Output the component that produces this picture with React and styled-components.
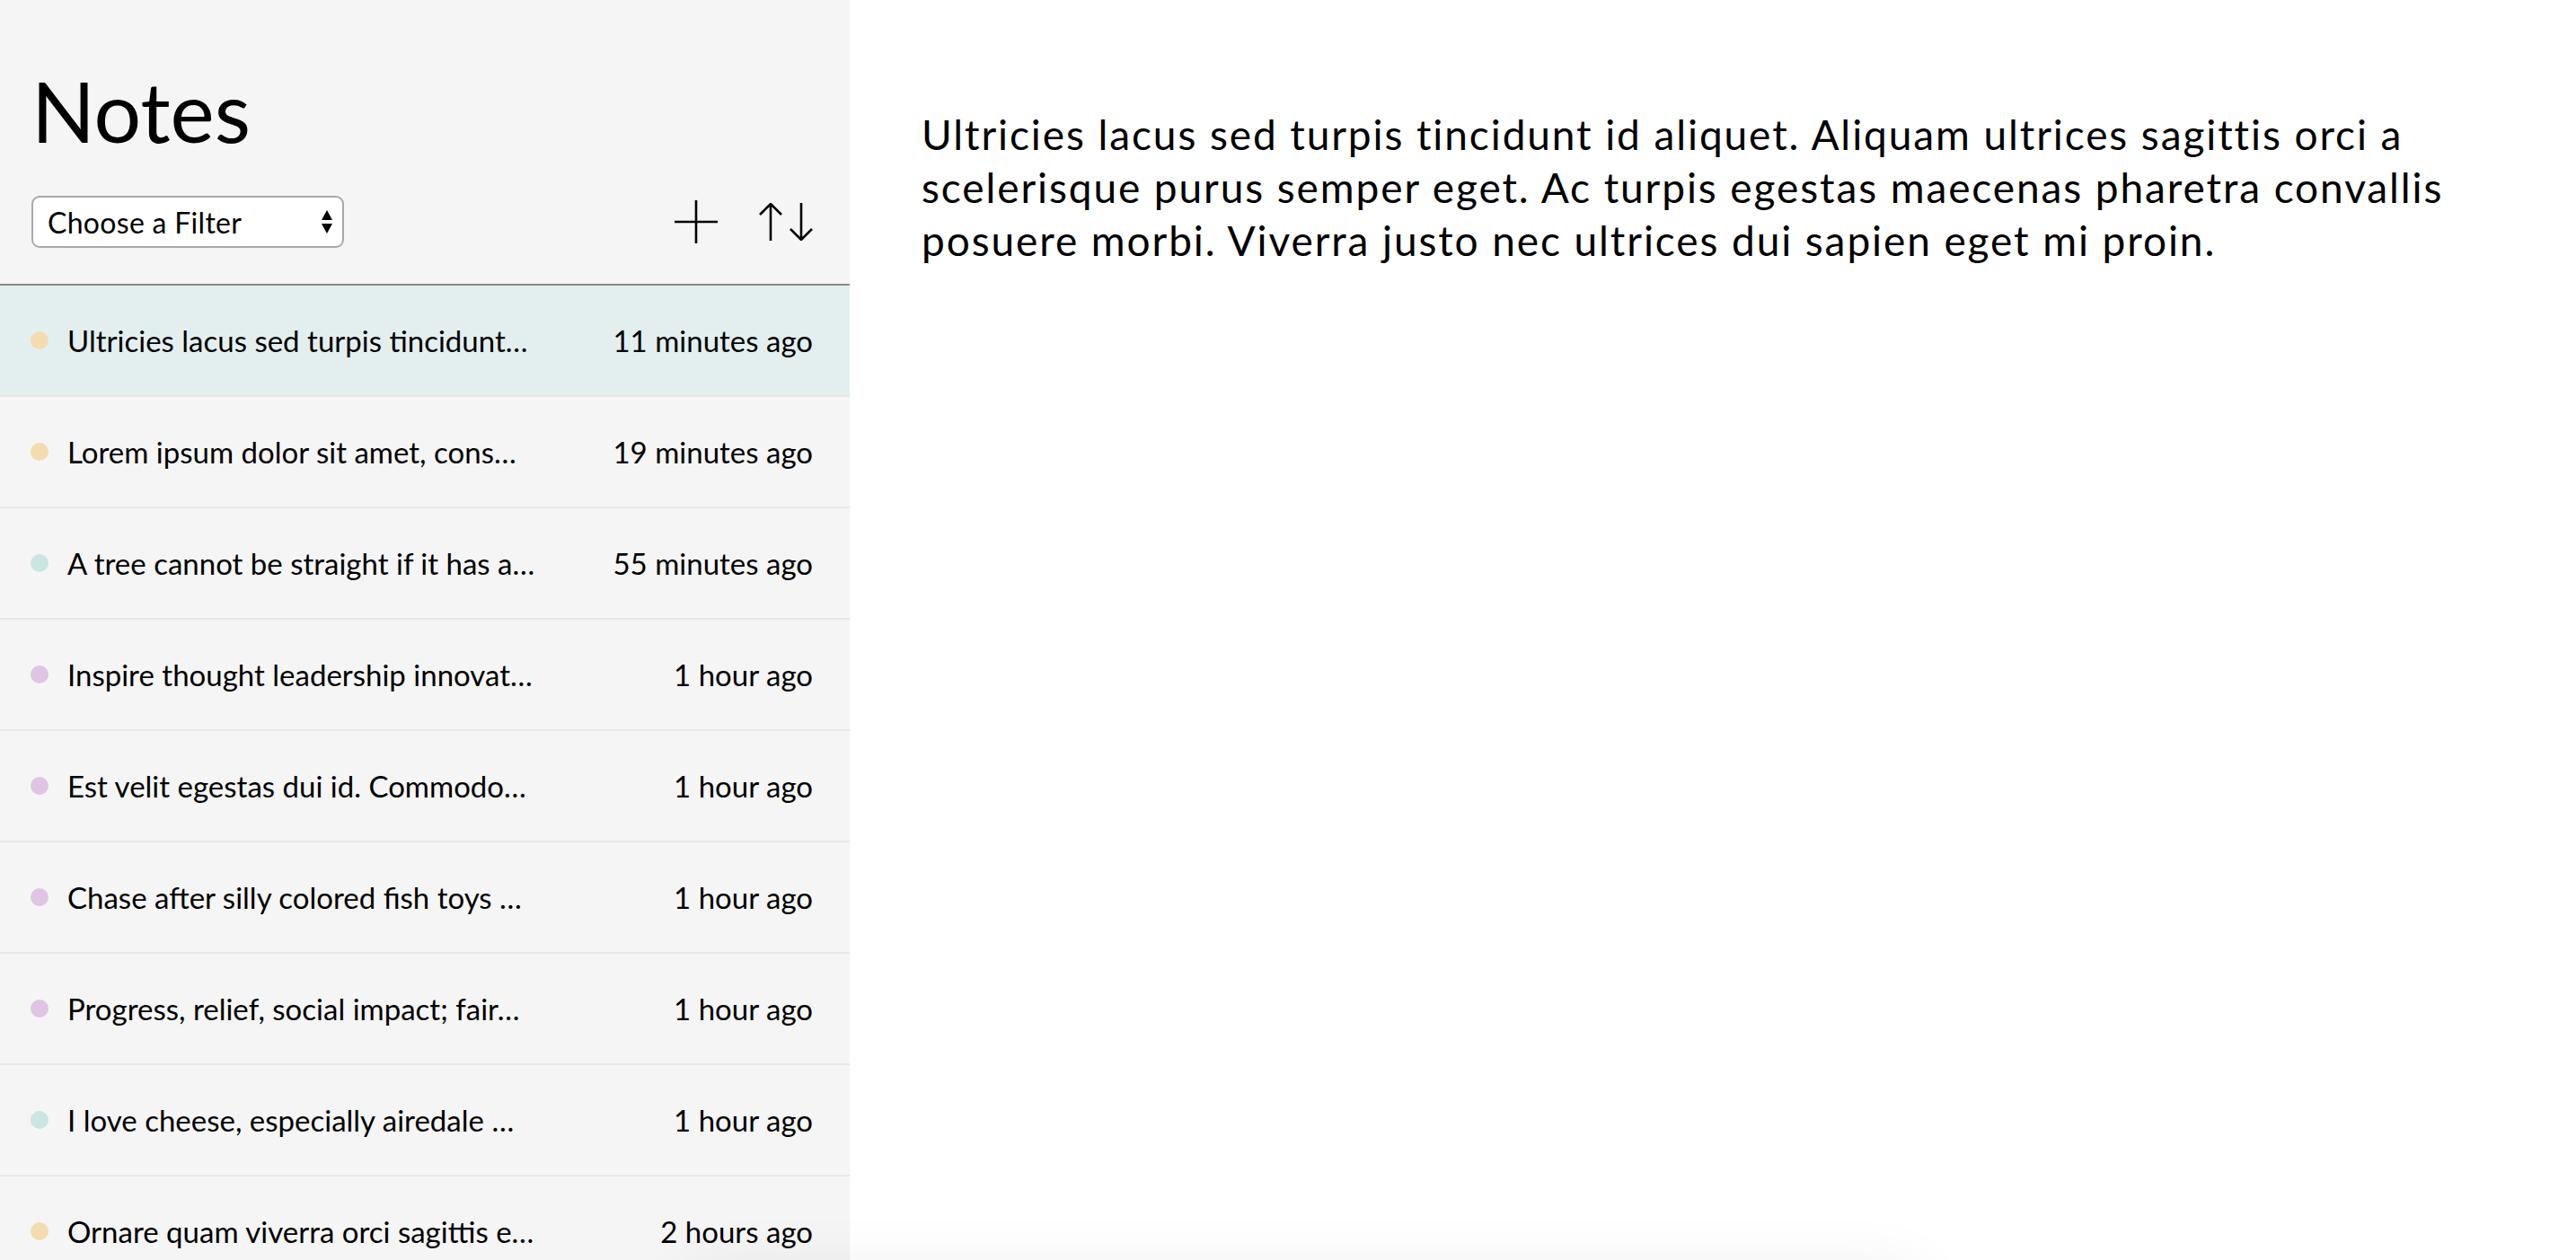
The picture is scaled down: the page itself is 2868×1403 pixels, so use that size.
import React from "react";
import styled, { createGlobalStyle } from "styled-components";

const GlobalStyle = createGlobalStyle`
  html, body {
    margin: 0;
    padding: 0;
    height: 100%;
    background: #fff;
  }
  body {
    font-family: "Lato", "Open Sans", sans-serif;
    color: #000;
    overflow: hidden;
  }
  #root {
    height: 100%;
  }
`;

const DOT_COLORS = {
  work: "#f5dcae",
  personal: "#c9e6e2",
  ideas: "#dfc4e4"
};

// previews are cut to what the list shows
const NOTES = [
  { id: 1, preview: "Ultricies lacus sed turpis tincidunt…", time: "11 minutes ago", tag: "work" },
  { id: 2, preview: "Lorem ipsum dolor sit amet, cons…", time: "19 minutes ago", tag: "work" },
  { id: 3, preview: "A tree cannot be straight if it has a…", time: "55 minutes ago", tag: "personal" },
  { id: 4, preview: "Inspire thought leadership innovat…", time: "1 hour ago", tag: "ideas" },
  { id: 5, preview: "Est velit egestas dui id. Commodo…", time: "1 hour ago", tag: "ideas" },
  { id: 6, preview: "Chase after silly colored fish toys …", time: "1 hour ago", tag: "ideas" },
  { id: 7, preview: "Progress, relief, social impact; fair…", time: "1 hour ago", tag: "ideas" },
  { id: 8, preview: "I love cheese, especially airedale …", time: "1 hour ago", tag: "personal" },
  { id: 9, preview: "Ornare quam viverra orci sagittis e…", time: "2 hours ago", tag: "work" }
];

const Layout = styled.div`
  display: flex;
  height: 100vh;
`;

const Sidebar = styled.aside`
  width: 946px;
  flex-shrink: 0;
  background: #f5f5f5;
  display: flex;
  flex-direction: column;
`;

const SidebarHeader = styled.header`
  padding: 68px 41px 40px 35px;
  border-bottom: 2px solid #8a8a8a;
`;

const Title = styled.h1`
  margin: 0 0 40px;
  font-size: 93px;
  font-weight: 400;
  line-height: 110px;
`;

const Toolbar = styled.div`
  display: flex;
  align-items: center;
  justify-content: space-between;
`;

const FilterSelect = styled.div`
  width: 348px;
  height: 58px;
  box-sizing: border-box;
  border: 2px solid #a9a9a9;
  border-radius: 9px;
  background: #fff;
  display: flex;
  align-items: center;
  justify-content: space-between;
  padding: 0 10px 0 16px;
  font-size: 32px;
  letter-spacing: 0.3px;
`;

const SelectArrows = styled.svg`
  width: 14px;
  height: 28px;
`;

const Actions = styled.div`
  display: flex;
  align-items: center;
  gap: 46px;
`;

const IconButton = styled.button`
  border: none;
  background: none;
  padding: 0;
  display: flex;
  cursor: pointer;
`;

const NoteList = styled.ul`
  list-style: none;
  margin: 0;
  padding: 0;
`;

const NoteRow = styled.li`
  height: 122px;
  border-bottom: 2px solid #e8e8e8;
  background: ${(p) => (p.$active ? "#e3efef" : "transparent")};
  display: flex;
  align-items: center;
  padding: 0 41px 0 34px;
  font-size: 33px;
`;

const Dot = styled.span`
  width: 20px;
  height: 20px;
  border-radius: 50%;
  flex-shrink: 0;
  background: ${(p) => DOT_COLORS[p.$tag]};
  margin-right: 21px;
`;

const NoteTitle = styled.span`
  max-width: 580px;
  white-space: nowrap;
  overflow: hidden;
  text-overflow: ellipsis;
`;

const NoteTime = styled.span`
  margin-left: auto;
  white-space: nowrap;
`;

const Main = styled.main`
  flex: 1;
  padding: 120px 80px 0;
`;

const NoteBody = styled.p`
  margin: 0;
  font-size: 46px;
  line-height: 59px;
  letter-spacing: 1.9px;
`;

const FooterGlow = styled.div`
  position: fixed;
  left: 760px;
  bottom: -70px;
  width: 1380px;
  height: 60px;
  border-radius: 30px;
  box-shadow: 0 0 70px rgba(0, 0, 0, 0.07);
  pointer-events: none;
`;

const PlusIcon = () => (
  <svg width="48" height="48" viewBox="0 0 48 48">
    <path d="M24 0v48M0 24h48" stroke="#000" strokeWidth="2.6" fill="none" />
  </svg>
);

const SortIcon = () => (
  <svg width="60" height="42" viewBox="0 0 60 42">
    <g stroke="#000" strokeWidth="2.6" fill="none">
      <path d="M13 1v41M1 13L13 1l12 12" />
      <path d="M47 0v41M35 29l12 12 12-12" />
    </g>
  </svg>
);

export default function App() {
  return (
    <>
      <GlobalStyle />
      <Layout>
        <Sidebar>
          <SidebarHeader>
            <Title>Notes</Title>
            <Toolbar>
              <FilterSelect>
                <span>Choose a Filter</span>
                <SelectArrows viewBox="0 0 14 28">
                  <path d="M7 1L13 12H1z M7 27L13 16H1z" fill="#000" />
                </SelectArrows>
              </FilterSelect>
              <Actions>
                <IconButton aria-label="New note">
                  <PlusIcon />
                </IconButton>
                <IconButton aria-label="Sort">
                  <SortIcon />
                </IconButton>
              </Actions>
            </Toolbar>
          </SidebarHeader>
          <NoteList>
            {NOTES.map((note, i) => (
              <NoteRow key={note.id} $active={i === 0}>
                <Dot $tag={note.tag} />
                <NoteTitle>{note.preview}</NoteTitle>
                <NoteTime>{note.time}</NoteTime>
              </NoteRow>
            ))}
          </NoteList>
        </Sidebar>
        <Main>
          <NoteBody>
            Ultricies lacus sed turpis tincidunt id aliquet. Aliquam ultrices
            sagittis orci a scelerisque purus semper eget. Ac turpis egestas
            maecenas pharetra convallis posuere morbi. Viverra justo nec
            ultrices dui sapien eget mi proin.
          </NoteBody>
        </Main>
      </Layout>
      <FooterGlow />
    </>
  );
}
